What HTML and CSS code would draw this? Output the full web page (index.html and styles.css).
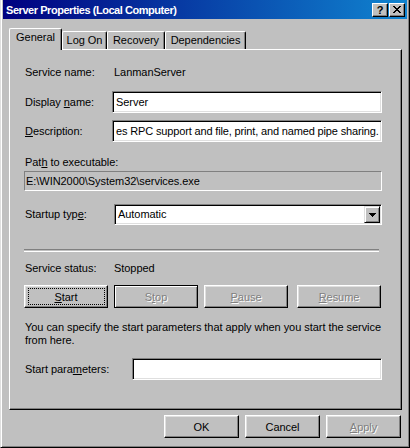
FILE: index.html
```html
<!DOCTYPE html>
<html>
<head>
	<meta charset="utf-8">
	<title>Server Properties (Local Computer)</title>
	<link rel="stylesheet" href="styles.css">
</head>
<body>
	<div class="window">
		<!-- title bar -->
		<div class="titlebar">
			<span class="title">Server Properties (Local Computer)</span>
			<div class="caption-buttons">
				<span class="cap-btn help">?</span>
				<span class="cap-btn close">
					<svg width="8" height="7" viewBox="0 0 8 7" shape-rendering="crispEdges"><path d="M0 0h2v1H0zM6 0h2v1H6zM1 1h2v1H1zM5 1h2v1H5zM2 2h4v1H2zM3 3h2v1H3zM2 4h4v1H2zM1 5h2v1H1zM5 5h2v1H5zM0 6h2v1H0zM6 6h2v1H6z" fill="#000"/></svg>
				</span>
			</div>
		</div>

		<div class="client">
			<div class="tabs">
				<div class="tab active tab-general">General</div>
				<div class="tab tab-logon">Log On</div>
				<div class="tab tab-recovery">Recovery</div>
				<div class="tab tab-deps">Dependencies</div>
			</div>

			<div class="panel">
				<div class="row info-row service-row">
					<span class="label">Service name:</span>
					<span>LanmanServer</span>
				</div>
				<div class="row field-row display-row">
					<span class="label">Display <u>n</u>ame:</span>
					<div class="field">Server</div>
				</div>
				<div class="row field-row desc-row">
					<span class="label"><u>D</u>escription:</span>
					<div class="field">es RPC support and file, print, and named pipe sharing.</div>
				</div>

				<div class="path-label">Pat<u>h</u> to executable:</div>
				<div class="path-box">E:\WIN2000\System32\services.exe</div>

				<div class="row startup-row">
					<span class="label">Startup typ<u>e</u>:</span>
					<div class="combo">
						<span class="combo-text">Automatic</span>
						<span class="combo-btn">
							<svg width="7" height="4" viewBox="0 0 7 4" shape-rendering="crispEdges"><path d="M0 0h7v1H0zM1 1h5v1H1zM2 2h3v1H2zM3 3h1v1H3z" fill="#000"/></svg>
						</span>
					</div>
				</div>

				<div class="separator"></div>

				<div class="row info-row status-row">
					<span class="label">Service status:</span>
					<span>Stopped</span>
				</div>

				<div class="svc-buttons">
					<button class="btn focused"><u>S</u>tart</button>
					<button class="btn default" disabled>S<u>t</u>op</button>
					<button class="btn" disabled><u>P</u>ause</button>
					<button class="btn resume" disabled><u>R</u>esume</button>
				</div>

				<p class="hint">You can specify the start parameters that apply when you start the service<br>from here.</p>

				<div class="row field-row params-row">
					<span class="label">Start para<u>m</u>eters:</span>
					<div class="field"></div>
				</div>
			</div>

			<div class="footer">
				<button class="btn">OK</button>
				<button class="btn">Cancel</button>
				<button class="btn" disabled><u>A</u>pply</button>
			</div>
		</div>
	</div>
</body>
</html>
```

FILE: styles.css
```css
html,body{
	margin: 0;
	background: #c0c0c0;
}
body{
	font-family: "Liberation Sans", Arial, sans-serif;
	font-size: 11px;
	line-height: 13px;
	letter-spacing: -0.05px;
	color: #000;
}
u{
	text-decoration: underline;
	text-underline-offset: 1px;
}

/* window frame */
.window{
	width: 410px;
	height: 448px;
	box-sizing: border-box;
	border-left: 1px solid #dfdfdf;
	border-right: 1px solid #000;
	border-bottom: 1px solid #000;
	box-shadow: inset 1px 0 #fff, inset -1px -1px #808080;
	padding: 0 2px 2px 2px;
	background: #c0c0c0;
}
.titlebar{
	height: 19px;
	display: flex;
	align-items: center;
	justify-content: space-between;
	background: linear-gradient(to right, #000080, #1084d0);
	padding: 0 2px 0 3px;
}
.title{
	color: #fff;
	font-weight: bold;
	letter-spacing: -0.45px;
	white-space: nowrap;
	padding-top: 1px;
}
.caption-buttons{
	display: flex;
	gap: 1px;
}
.cap-btn{
	width: 16px;
	height: 14px;
	box-sizing: border-box;
	background: #c0c0c0;
	border: 1px solid;
	border-color: #fff #000 #000 #fff;
	box-shadow: inset -1px -1px #808080;
	display: flex;
	align-items: center;
	justify-content: center;
	font-weight: bold;
	font-size: 11px;
	line-height: 12px;
}
.close svg{
	display: block;
	margin-left: -1px;
}

/* tabs */
.client{
	padding-left: 6px;
}
.tabs{
	display: flex;
	align-items: flex-end;
	height: 21px;
	margin-top: 9px;
}
.tab{
	box-sizing: border-box;
	height: 18px;
	border-left: 1px solid #fff;
	border-top: 1px solid #fff;
	border-right: 1px solid #000;
	border-radius: 2px 2px 0 0;
	box-shadow: inset -1px 0 #808080;
	text-align: center;
	line-height: 17px;
	background: #c0c0c0;
}
.tab.active{
	height: 22px;
	margin-bottom: -1px;
	position: relative;
	z-index: 1;
	line-height: 17px;
}
.tab-general{ width: 53px; }
.tab-logon{ width: 45px; }
.tab-recovery{ width: 58px; }
.tab-deps{ width: 81px; }

/* page */
.panel{
	width: 393px;
	height: 361px;
	box-sizing: border-box;
	border-top: 1px solid #fff;
	border-left: 1px solid #fff;
	border-right: 1px solid #000;
	border-bottom: 1px solid #000;
	box-shadow: inset -1px -1px #808080;
	padding: 0 19px 0 15px;
}
.row{
	display: flex;
	align-items: center;
}
.label{
	flex: none;
	white-space: nowrap;
}
.info-row .label{ width: 89px; }
.field-row .label{ width: 87px; }
.service-row{ margin-top: 16px; }
.display-row{ margin-top: 12px; }
.desc-row{ margin-top: 7px; }

.field{
	flex: 1;
	height: 22px;
	box-sizing: border-box;
	background: #fff;
	border: 1px solid;
	border-color: #808080 #fff #fff #808080;
	box-shadow: inset 1px 1px #000, inset -1px -1px #dfdfdf;
	padding: 0 2px 0 3px;
	line-height: 20px;
	white-space: nowrap;
	overflow: hidden;
}
.desc-row .field{
	letter-spacing: -0.15px;
}

.path-label{
	margin-top: 14px;
}
.path-box{
	margin: 2px 0 0 -1px;
	height: 20px;
	box-sizing: border-box;
	border: 1px solid;
	border-color: #808080 #fff #fff #808080;
	padding-left: 1px;
	line-height: 18px;
}

.startup-row{
	margin-top: 13px;
}
.startup-row .label{ width: 87px; }
.combo{
	flex: 1;
	margin-left: 2px;
	height: 21px;
	box-sizing: border-box;
	background: #fff;
	border: 1px solid;
	border-color: #808080 #fff #fff #808080;
	box-shadow: inset 1px 1px #000, inset -1px -1px #dfdfdf;
	padding: 2px 2px 2px 3px;
	display: flex;
	align-items: center;
}
.combo-text{
	flex: 1;
}
.combo-btn{
	width: 16px;
	height: 17px;
	box-sizing: border-box;
	background: #c0c0c0;
	border: 1px solid;
	border-color: #dfdfdf #000 #000 #dfdfdf;
	box-shadow: inset 1px 1px #fff, inset -1px -1px #808080;
	display: flex;
	align-items: center;
	justify-content: center;
	margin-right: -1px;
}
.combo-btn svg{
	display: block;
}

.separator{
	margin: 24px 0 0 -1px;
	width: 355px;
	height: 1px;
	border-top: 1px solid #808080;
	border-bottom: 1px solid #fff;
}
.status-row{
	margin-top: 10px;
}

/* buttons */
.btn{
	font-family: inherit;
	font-size: 11px;
	letter-spacing: inherit;
	color: #000;
	height: 23px;
	box-sizing: border-box;
	background: #c0c0c0;
	border: 1px solid;
	border-color: #fff #000 #000 #fff;
	box-shadow: inset -1px -1px #808080, inset 1px 1px #dfdfdf;
	padding: 0;
	position: relative;
}
.btn:disabled{
	color: #808080;
	text-shadow: 1px 1px 0 #fff;
}
.btn.default{
	border-color: #000;
	box-shadow: inset 1px 1px #fff, inset -1px -1px #808080;
}
.btn.focused::after{
	content: "";
	position: absolute;
	top: 2px;
	left: 3px;
	right: 2px;
	bottom: 2px;
	border: 1px dotted #000;
}
.svc-buttons{
	display: flex;
	gap: 6px;
	margin: 10px 0 0 -1px;
}
.svc-buttons .btn{
	width: 84px;
}
.svc-buttons .resume{
	margin-left: 3px;
}

.hint{
	margin: 13px 0 0;
	white-space: nowrap;
}
.params-row{
	margin-top: 11px;
}
.params-row .label{
	width: 107px;
}

.footer{
	width: 392px;
	display: flex;
	justify-content: flex-end;
	gap: 6px;
	margin-top: 5px;
}
.footer .btn{
	width: 75px;
}
```
